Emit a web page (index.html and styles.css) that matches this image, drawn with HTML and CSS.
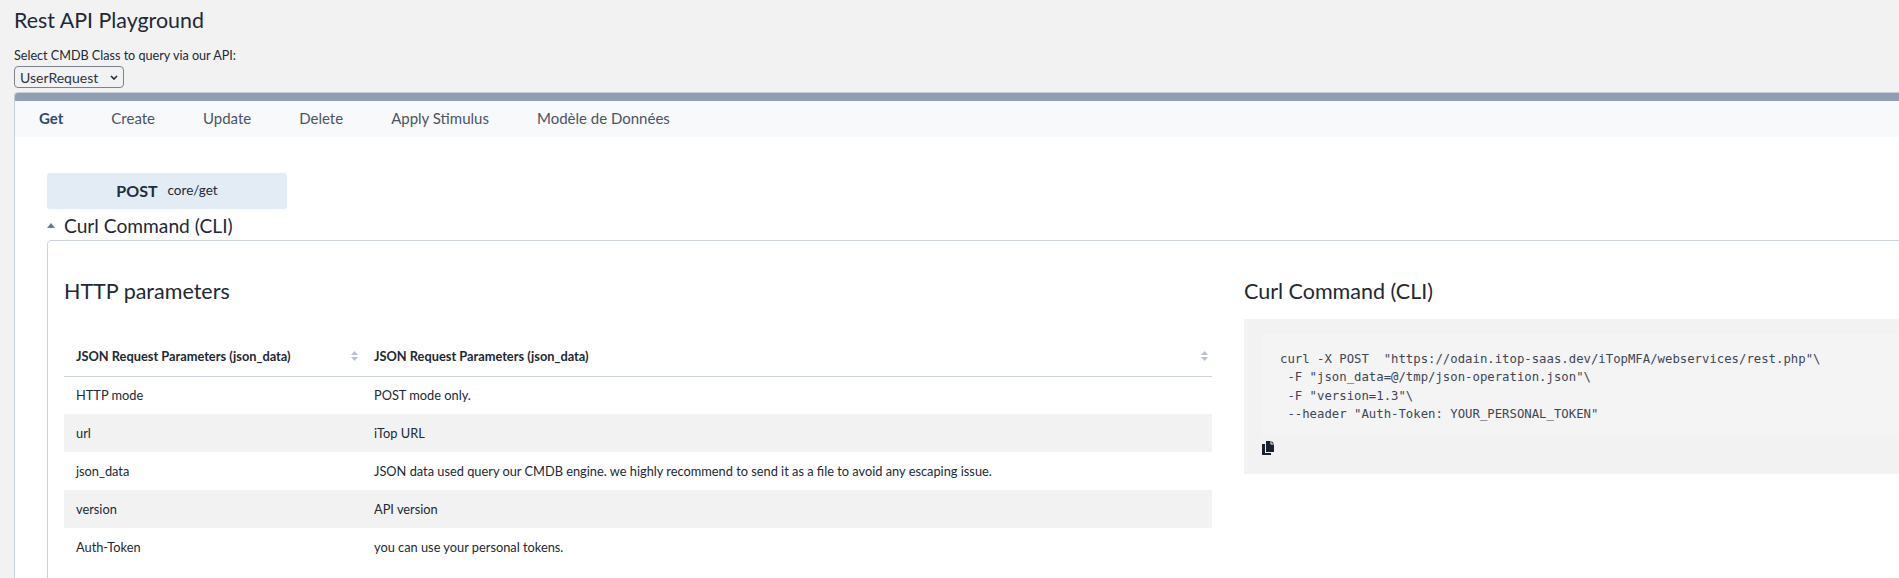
FILE: index.html
```html
<!DOCTYPE html>
<html lang="en">
<head>
<meta charset="utf-8">
<title>Rest API Playground</title>
<link rel="stylesheet" href="styles.css">
</head>
<body>
<h1 class="page-title">Rest API Playground</h1>
<label class="class-label" for="cls">Select CMDB Class to query via our API:</label>
<div class="select-row">
  <select id="cls" class="class-select"><option>UserRequest</option></select>
  <svg class="select-arrow" viewBox="0 0 8 5" width="8" height="5"><path d="M1 1l3 3 3-3"/></svg>
</div>
<section class="panel">
  <div class="panel-bar"></div>
  <nav class="tabs">
    <a class="tab active">Get</a>
    <a class="tab">Create</a>
    <a class="tab">Update</a>
    <a class="tab">Delete</a>
    <a class="tab">Apply Stimulus</a>
    <a class="tab">Modèle de Données</a>
  </nav>
  <div class="panel-body">
    <div class="endpoint"><strong class="verb">POST</strong><span class="route">core/get</span></div>
    <div class="collapsible-head">
      <svg class="caret" viewBox="0 0 8 5" width="8" height="5"><path d="M4 0 8 5H0z"/></svg>
      <span class="collapsible-title">Curl Command (CLI)</span>
    </div>
    <div class="collapsible-box">
      <div class="col-left">
        <h2 class="section-title">HTTP parameters</h2>
        <table class="params">
          <thead>
            <tr>
              <th class="c1"><div class="th-in"><span>JSON Request Parameters (json_data)</span>
                <svg class="sort" viewBox="0 0 7 10" width="7" height="10"><path d="M3.500 0 7 4H0zM3.500 10 0 6H7z"/></svg></div></th>
              <th><div class="th-in"><span>JSON Request Parameters (json_data)</span>
                <svg class="sort" viewBox="0 0 7 10" width="7" height="10"><path d="M3.500 0 7 4H0zM3.500 10 0 6H7z"/></svg></div></th>
            </tr>
          </thead>
          <tbody>
            <tr><td>HTTP mode</td><td>POST mode only.</td></tr>
            <tr><td>url</td><td>iTop URL</td></tr>
            <tr><td>json_data</td><td>JSON data used query our CMDB engine. we highly recommend to send it as a file to avoid any escaping issue.</td></tr>
            <tr><td>version</td><td>API version</td></tr>
            <tr><td>Auth-Token</td><td>you can use your personal tokens.</td></tr>
          </tbody>
        </table>
      </div>
      <div class="col-right">
        <h2 class="section-title">Curl Command (CLI)</h2>
        <div class="code-box">
          <pre class="code">curl -X POST  "https://odain.itop-saas.dev/iTopMFA/webservices/rest.php"\
 -F "json_data=@/tmp/json-operation.json"\
 -F "version=1.3"\
 --header "Auth-Token: YOUR_PERSONAL_TOKEN"</pre>
          <svg class="copy" viewBox="0 0 12 14" width="12" height="14"><path d="M4 0h4.500v3.500H12V11H4z"/><path d="M9.500 0 12 2.500H9.500z"/><path d="M0 3h3v9h6v2H0z"/></svg>
        </div>
      </div>
    </div>
  </div>
</section>
</body>
</html>
```
FILE: styles.css
```css
html, body { margin: 0; padding: 0; overflow: hidden; height: 578px; }
body { background: #f2f2f2; color: #212934; font-family: "Lato", "Open Sans", sans-serif; font-size: 12.6px; width: 2100px; }
.page-title { margin: 0; padding: 8px 0 0 14px; font-size: 21.4px; line-height: 24px; font-weight: 400; height: 24px; }
.class-label { display: block; margin: 16px 0 0 14px; line-height: 15px; height: 15px; }
.select-row { position: relative; margin: 3px 0 0 14px; height: 26px; }
.class-select { appearance: none; width: 110px; height: 22px; font: inherit; font-size: 14px; color: #2c3540; background: #f2f2f2; border: 1px solid #7d838d; border-radius: 4px; padding: 0 5px; display: block; }
.select-arrow { position: absolute; left: 96px; top: 9px; fill: none; stroke: #212934; stroke-width: 1.6; }
.panel { margin-left: 14px; border-left: 1px solid #c5ced9; border-top: 1px solid #c5ced9; background: #fff; height: 486px; box-sizing: border-box; border-radius: 4px 0 0 0; overflow: hidden; }
.panel-bar { height: 8px; background: #8f9eb2; }
.tabs { display: flex; height: 36px; box-sizing: border-box; padding: 0 0 2px 24px; background: #f8f9fb; align-items: center; gap: 48px; font-size: 15px; color: #4b5563; }
.tab.active { color: #2f4a6d; font-weight: 700; }
.panel-body { padding: 36px 0 0 32px; }
.endpoint { width: 240px; height: 36px; box-sizing: border-box; padding-bottom: 2px; background: #e3ebf5; border-radius: 3px; display: flex; align-items: center; justify-content: center; gap: 10px; }
.verb { font-size: 16px; color: #1f2d3d; }
.route { font-size: 13.5px; }
.collapsible-head { display: flex; align-items: center; gap: 9px; height: 31px; padding-top: 2px; box-sizing: border-box; }
.caret { fill: #6b7a8c; }
.collapsible-title { font-size: 19.2px; }
.collapsible-box { display: flex; border: 1px solid #ccd3dc; border-radius: 4px; padding: 0 16px; width: 2000px; height: 400px; background: #fff; }
.col-left { width: 1148px; margin-right: 32px; }
.col-right { width: 800px; }
.section-title { margin: 0; padding-top: 38px; font-size: 21.5px; line-height: 24px; font-weight: 400; }
.params { margin-top: 33px; width: 1148px; border-collapse: collapse; table-layout: fixed; font-size: 12.8px; }
.params th { height: 40px; padding: 0 2px 0 12px; text-align: left; font-weight: 700; border-bottom: 1px solid #ccd3dc; box-sizing: border-box; }
.params th.c1 { width: 298px; }
.th-in { display: flex; justify-content: space-between; align-items: center; }
.sort { fill: #b8c0cb; margin-right: 2px; }
.params td { height: 38px; padding: 0 12px; box-sizing: border-box; }
.params tbody tr:nth-child(even) { background: #f2f2f2; }
.code-box { margin-top: 16px; height: 155px; background: #f2f2f2; padding: 15px 18px 0; box-sizing: border-box; }
.code { margin: 0; height: 103px; box-sizing: border-box; padding: 16px 18px; background: #f4f4f4; font-family: "DejaVu Sans Mono", monospace; font-size: 12.3px; line-height: 18.375px; color: #3d4654; }
.copy { display: block; margin-top: 4px; fill: #1a2230; }
```
